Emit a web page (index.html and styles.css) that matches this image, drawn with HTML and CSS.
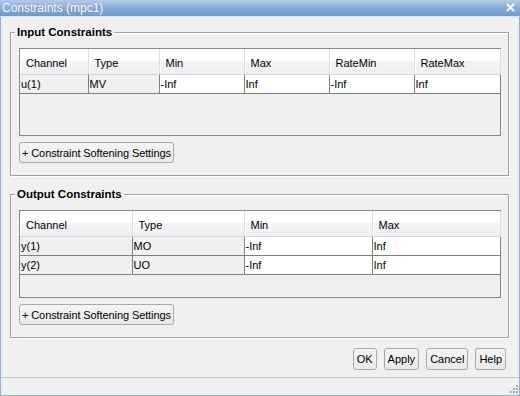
FILE: index.html
```html
<!DOCTYPE html>
<html lang="en">
<head>
    <meta charset="UTF-8">
    <title>Constraints (mpc1)</title>
    <link rel="stylesheet" href="styles.css">
</head>
<body>
    <div class="window">
        <div class="titlebar">
            <span class="title">Constraints (mpc1)</span>
            <svg class="close-icon" width="9" height="9" viewBox="0 0 9 9">
                <path d="M1 1 L8 8 M8 1 L1 8" stroke="#fff" stroke-width="1.8" fill="none"/>
            </svg>
        </div>

        <div class="content">
            <fieldset class="group">
                <legend>Input Constraints</legend>
                <div class="grid-box">
                    <table class="grid">
                        <colgroup>
                            <col style="width: 68px">
                            <col style="width: 71px">
                            <col style="width: 85px">
                            <col style="width: 85px">
                            <col style="width: 85px">
                            <col style="width: 86px">
                        </colgroup>
                        <thead>
                            <tr>
                                <th>Channel</th>
                                <th>Type</th>
                                <th>Min</th>
                                <th>Max</th>
                                <th>RateMin</th>
                                <th>RateMax</th>
                            </tr>
                        </thead>
                        <tbody>
                            <tr>
                                <td class="readonly">u(1)</td>
                                <td class="readonly">MV</td>
                                <td>-Inf</td>
                                <td>Inf</td>
                                <td>-Inf</td>
                                <td>Inf</td>
                            </tr>
                        </tbody>
                    </table>
                </div>
                <button class="btn soften-btn">+ Constraint Softening Settings</button>
            </fieldset>

            <fieldset class="group">
                <legend>Output Constraints</legend>
                <div class="grid-box">
                    <table class="grid">
                        <colgroup>
                            <col style="width: 112px">
                            <col style="width: 112px">
                            <col style="width: 128px">
                            <col style="width: 128px">
                        </colgroup>
                        <thead>
                            <tr>
                                <th>Channel</th>
                                <th>Type</th>
                                <th>Min</th>
                                <th>Max</th>
                            </tr>
                        </thead>
                        <tbody>
                            <tr>
                                <td class="readonly">y(1)</td>
                                <td class="readonly">MO</td>
                                <td>-Inf</td>
                                <td>Inf</td>
                            </tr>
                            <tr>
                                <td class="readonly">y(2)</td>
                                <td class="readonly">UO</td>
                                <td>-Inf</td>
                                <td>Inf</td>
                            </tr>
                        </tbody>
                    </table>
                </div>
                <button class="btn soften-btn">+ Constraint Softening Settings</button>
            </fieldset>
        </div>

        <div class="actions">
            <button class="btn">OK</button>
            <button class="btn">Apply</button>
            <button class="btn">Cancel</button>
            <button class="btn">Help</button>
        </div>

        <div class="statusbar">
            <svg class="grip" width="10" height="10" viewBox="0 0 10 10">
                <rect x="8" y="1" width="2" height="2" fill="#a8a8a8"/>
                <rect x="5" y="4" width="2" height="2" fill="#a8a8a8"/>
                <rect x="8" y="4" width="2" height="2" fill="#a8a8a8"/>
                <rect x="2" y="7" width="2" height="2" fill="#a8a8a8"/>
                <rect x="5" y="7" width="2" height="2" fill="#a8a8a8"/>
                <rect x="8" y="7" width="2" height="2" fill="#a8a8a8"/>
            </svg>
        </div>
    </div>
</body>
</html>
```

FILE: styles.css
```css
* {
    box-sizing: border-box;
}

body {
    margin: 0;
    width: 520px;
    height: 396px;
    overflow: hidden;
    font-family: "Liberation Sans", Arial, sans-serif;
    font-size: 11px;
    color: #000;
}

.window {
    width: 520px;
    height: 396px;
    display: flex;
    flex-direction: column;
    background: #f0f0f0;
    border: 1px solid #8eaed6;
    border-top: none;
}

/* title bar */
.titlebar {
    height: 17px;
    margin: 0 -1px;
    padding: 0 0 0 2px;
    display: flex;
    align-items: center;
    justify-content: space-between;
    background: linear-gradient(#b3cae6 0%, #8fb0da 45%, #6f98cc 100%);
    border-bottom: 1px solid #d6e2f0;
}

.title {
    color: #fff;
    font-size: 12px;
    line-height: 16px;
    text-shadow: 0 0 1px rgba(40, 70, 120, 0.4);
}

.close-icon {
    margin-right: 5px;
    margin-top: -1px;
}

/* group boxes */
.content {
    padding: 0 10px 0 9px;
}

.group {
    margin: 8px 0 0;
    padding: 9px 7px 12px 8px;
    border: 1px solid #a0a0a0;
    box-shadow: 1px 1px 0 #fff, inset 1px 1px 0 #fff;
    min-width: 0;
}

.group + .group {
    margin-top: 11px;
}

.group legend {
    font-weight: bold;
    font-size: 11.5px;
    line-height: 14px;
    padding: 0 2px;
    margin-left: -4px;
}

/* tables */
.grid-box {
    height: 88px;
    border: 1px solid #828790;
    background: #f0f0f0;
}

.grid {
    width: 480px;
    table-layout: fixed;
    border-collapse: collapse;
}

.grid th {
    height: 25px;
    padding: 4px 0 0 6px;
    text-align: left;
    font-weight: normal;
    background: linear-gradient(#ffffff 0%, #ffffff 45%, #f3f4f6 50%, #eceef1 100%);
    border-right: 1px solid #dcdddf;
    border-bottom: 1px solid #d5d6d8;
    box-shadow: inset 1px 0 0 #fff;
}

.grid td {
    height: 19px;
    padding: 0 0 0 1px;
    background: #fff;
    border-right: 1px solid #808080;
    border-bottom: 1px solid #808080;
    white-space: nowrap;
}

.grid td.readonly {
    background: #f0f0f0;
}

/* buttons */
.btn {
    height: 22px;
    padding: 0 3px;
    font-family: inherit;
    font-size: 11px;
    color: #000;
    background: linear-gradient(#f4f4f4, #e9e9e9);
    border: 1px solid #a9a9a9;
    border-radius: 3px;
}

.soften-btn {
    display: block;
    height: 21px;
    margin-top: 6px;
    padding: 0 2px;
    letter-spacing: -0.1px;
}

.actions {
    display: flex;
    justify-content: flex-end;
    gap: 7px;
    margin-top: 10px;
    padding: 0 13px 7px 0;
    border-bottom: 1px solid #b8cce4;
}

.statusbar {
    flex: 1;
    display: flex;
    justify-content: flex-end;
    align-items: flex-end;
    padding: 0 1px 1px 0;
}
```
